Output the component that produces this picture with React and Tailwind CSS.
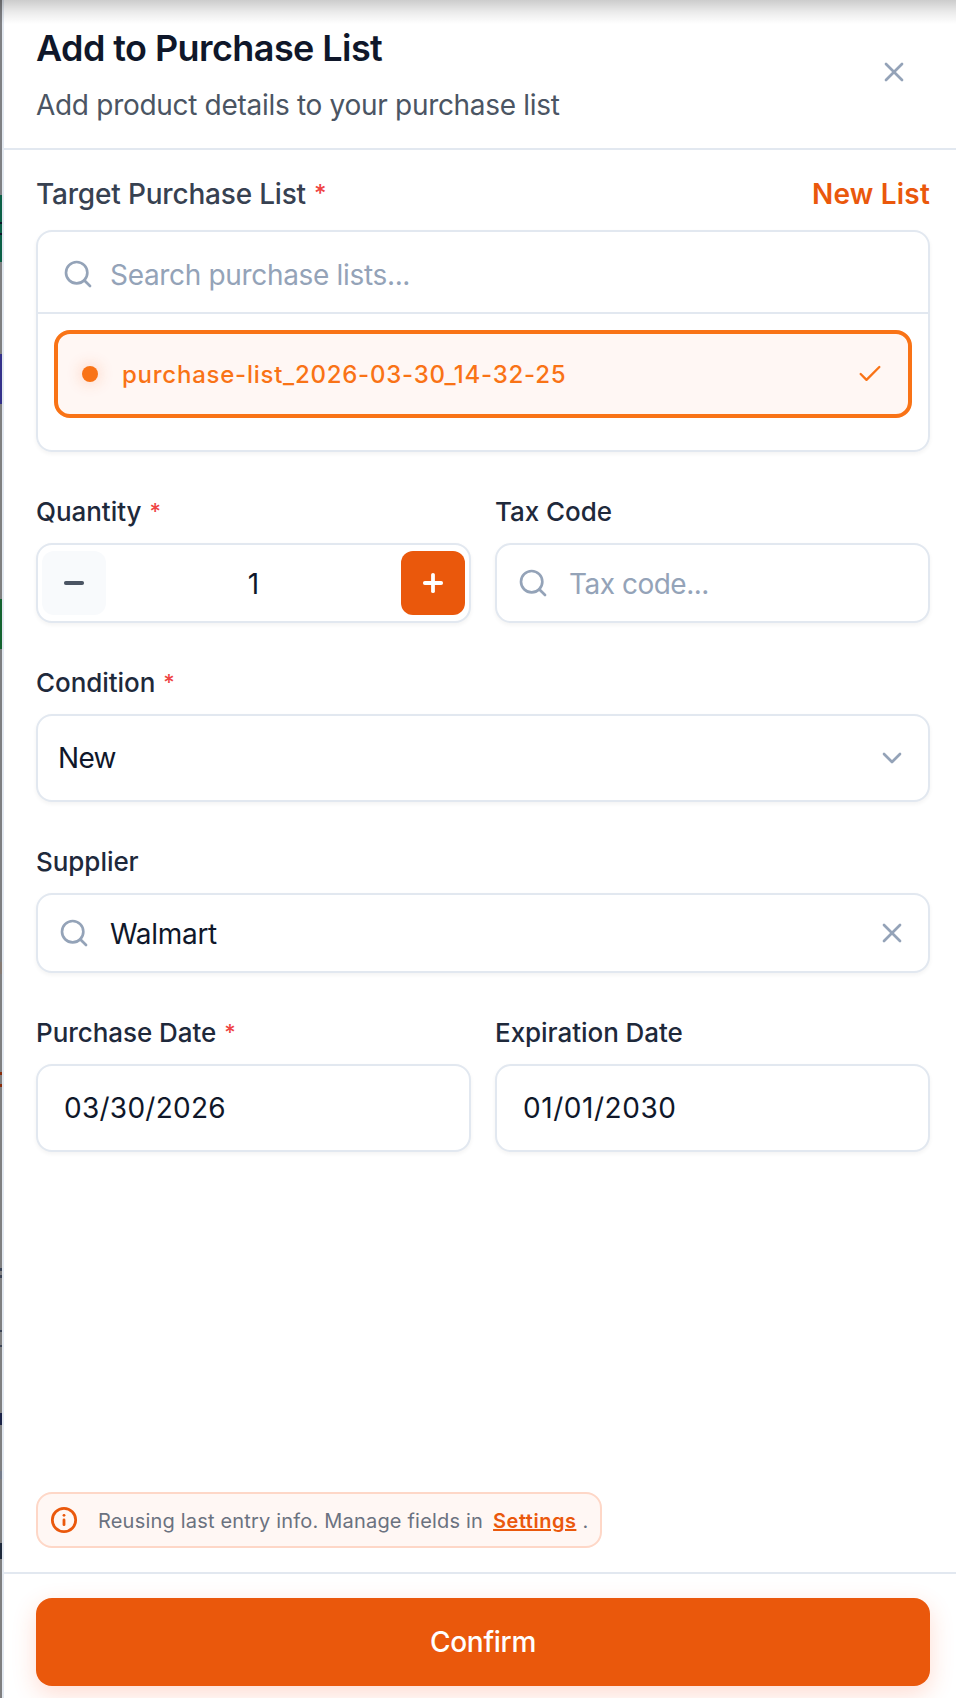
import React, { useState } from 'react'
import { Check, ChevronDown, Info, Minus, Plus, Search, X } from 'lucide-react'

// page edge that stays visible beside the drawer
const edge = [
    { h: 195, color: '#7f8083' },
    { h: 27, color: '#0b6046' },
    { h: 2, color: '#0f172a' },
    { h: 9, color: '#0b6046' },
    { h: 2, color: '#0f172a' },
    { h: 27, color: '#0b6046' },
    { h: 92, color: '#7f7f80' },
    { h: 50, color: '#34318a' },
    { h: 195, color: '#7f7f7f' },
    { h: 50, color: '#14632f' },
    { h: 313, color: '#7d7e80' },
    { h: 12, color: '#867a72' },
    { h: 98, color: '#7f7f80' },
    { h: 3, color: '#8a2c0a' },
    { h: 9, color: '#7f7f80' },
    { h: 3, color: '#8a2c0a' },
    { h: 181, color: '#7f7f80' },
    { h: 3, color: '#3c4455' },
    { h: 4, color: '#7f7f80' },
    { h: 3, color: '#3c4455' },
    { h: 52, color: '#7f7f80' },
    { h: 2, color: '#3c4455' },
    { h: 13, color: '#7f7f80' },
    { h: 2, color: '#3c4455' },
    { h: 66, color: '#7f7f80' },
    { h: 12, color: '#1b2347' },
    { h: 46, color: '#7f7f80' },
    { h: 8, color: '#747b89' },
    { h: 64, color: '#7f7f80' },
    { h: 16, color: '#1e293b' },
    { h: 140, color: '#7f7f80' }
]

const box = 'flex items-center w-full rounded-2xl border-2 border-[#e2e8f0] bg-white shadow-[0_2px_4px_rgba(0,0,0,0.05)]'

function Field({ label, required, children }) {
    return (
        <div className="flex-1 min-w-0">
            <label className="block h-[39px] mb-3 text-[26px] leading-[39px] font-medium tracking-[-0.05px] text-[#1e293b]">
                {label}
                {required && <span className="ml-2 align-[2px] text-[22px] leading-none font-medium text-[#ef4444]">*</span>}
            </label>
            {children}
        </div>
    )
}

export default function App() {
    const [quantity, setQuantity] = useState(1)
    const [supplier, setSupplier] = useState('Walmart')

    return (
        <div className="relative flex w-[956px] h-[1698px] overflow-hidden bg-white font-['Inter',sans-serif]">
            <div className="flex flex-col w-0.5 shrink-0">
                {edge.map((part, idx) => (
                    <div key={idx} className="shrink-0" style={{ height: part.h, background: part.color }} />
                ))}
            </div>

            <section className="flex flex-col flex-1 min-w-0 border-l-2 border-[#e2e8f0]">
                {/* Header */}
                <header className="flex items-start justify-between h-[150px] shrink-0 pl-8 pr-[46px] pt-6 border-b-2 border-[#e2e8f0]">
                    <div>
                        <h2 className="text-[36px] leading-[48px] font-semibold tracking-[-0.58px] text-[#0f172a]">Add to Purchase List</h2>
                        <p className="mt-3 text-[28px] leading-[42px] tracking-[-0.3px] text-[#4b5563]">Add product details to your purchase list</p>
                    </div>
                    <button className="mt-8 text-[#94a3b8]">
                        <X size={32} strokeWidth={2} />
                    </button>
                </header>

                <main className="flex flex-col flex-1 pl-8 pr-[26px] pt-6">
                    {/* Target list */}
                    <div className="flex items-center justify-between h-10 mb-4 pt-px text-[28px] leading-[41px]">
                        <label className="font-medium tracking-[-0.19px] text-[#374151]">
                            Target Purchase List<span className="ml-2 align-[2px] text-[24px] leading-none font-medium text-[#ef4444]">*</span>
                        </label>
                        <button className="font-semibold tracking-[0.2px] text-[#ea580c]">New List</button>
                    </div>
                    <div className="h-[222px] rounded-2xl border-2 border-[#e2e8f0] shadow-[0_2px_4px_rgba(0,0,0,0.05)]">
                        <div className="flex items-center h-[82px] pl-6 pt-1 border-b-2 border-[#e2e8f0]">
                            <Search size={32} strokeWidth={2} className="text-[#94a3b8] shrink-0" />
                            <input
                                className="flex-1 ml-4 pt-0.5 text-[28px] tracking-[-0.33px] outline-none placeholder:text-[#94a3b8]"
                                placeholder="Search purchase lists..."
                            />
                        </div>
                        <div className="p-4">
                            <div className="flex items-center h-[88px] pl-6 pr-6 rounded-2xl border-4 border-[#f97316] bg-[#fff7f4] text-[#f97316]">
                                <span className="w-4 h-4 rounded-full bg-[#f97316] shadow-[0_0_16px_rgba(249,90,22,0.3)]"></span>
                                <span className="flex-1 ml-6 pt-0.5 text-[24px] font-medium tracking-[0.75px]">purchase-list_2026-03-30_14-32-25</span>
                                <Check size={28} strokeWidth={2} />
                            </div>
                        </div>
                    </div>

                    <div className="flex flex-col gap-10 mt-10">
                        <div className="flex gap-6">
                            <Field label="Quantity" required>
                                <div className={`${box} justify-between h-20 px-1`}>
                                    <button
                                        className="flex items-center justify-center w-16 h-16 rounded-xl bg-[#f8fafc] text-[#4b5563]"
                                        onClick={() => setQuantity(Math.max(1, quantity - 1))}
                                    >
                                        <Minus size={28} strokeWidth={3.25} />
                                    </button>
                                    <span className="pt-0.5 text-[28px] leading-10 text-[#0f172a]">{quantity}</span>
                                    <button
                                        className="flex items-center justify-center w-16 h-16 rounded-xl bg-[#ea580c] text-white"
                                        onClick={() => setQuantity(quantity + 1)}
                                    >
                                        <Plus size={28} strokeWidth={3.25} />
                                    </button>
                                </div>
                            </Field>
                            <Field label="Tax Code">
                                <div className={`${box} h-20 pl-5 pr-5`}>
                                    <Search size={32} strokeWidth={2} className="text-[#94a3b8] shrink-0" />
                                    <input
                                        className="flex-1 min-w-0 ml-5 pt-0.5 text-[28px] tracking-[-0.5px] outline-none placeholder:text-[#94a3b8]"
                                        placeholder="Tax code..."
                                    />
                                </div>
                            </Field>
                        </div>

                        <Field label="Condition" required>
                            <div className={`${box} justify-between h-22 px-5 text-[28px] tracking-[-0.7px] text-[#0f172a]`}>
                                <span>New</span>
                                <ChevronDown size={32} strokeWidth={2} className="text-[#94a3b8]" />
                            </div>
                        </Field>

                        <Field label="Supplier">
                            <div className={`${box} h-20 px-5`}>
                                <Search size={32} strokeWidth={2} className="text-[#94a3b8] shrink-0" />
                                <input
                                    className="flex-1 min-w-0 ml-5 pt-0.5 text-[28px] tracking-[-0.3px] text-[#0f172a] outline-none"
                                    value={supplier}
                                    onChange={(e) => setSupplier(e.target.value)}
                                />
                                <button className="text-[#94a3b8]" onClick={() => setSupplier('')}>
                                    <X size={32} strokeWidth={2} />
                                </button>
                            </div>
                        </Field>

                        <div className="flex gap-6">
                            <Field label="Purchase Date" required>
                                <div className={`${box} h-22 px-[26px] text-[28px] tracking-[0.27px] text-[#0f172a]`}>03/30/2026</div>
                            </Field>
                            <Field label="Expiration Date">
                                <div className={`${box} h-22 px-[26px] text-[28px] tracking-[0.55px] text-[#0f172a]`}>01/01/2030</div>
                            </Field>
                        </div>
                    </div>

                    {/* Reuse hint */}
                    <div className="flex items-center self-start h-14 mt-auto mb-6 px-3 rounded-2xl border-2 border-[#fed7c7] bg-[#fff7f4] text-[20px] text-[#6b7280]">
                        <Info size={28} strokeWidth={2.4} className="text-[#ea580c]" />
                        <span className="ml-5 pt-0.5 tracking-[0.19px]">Reusing last entry info. Manage fields in</span>
                        <a className="ml-2.5 pt-0.5 font-semibold tracking-[0.5px] text-[#ea580c] underline">Settings</a>
                        <span className="ml-1.5 pt-0.5">.</span>
                    </div>
                </main>

                <footer className="h-[126px] shrink-0 pl-8 pr-[26px] pt-6 border-t-2 border-[#e2e8f0]">
                    <button className="w-full h-22 rounded-2xl bg-[#ea580c] text-[28px] font-medium tracking-[-0.3px] text-white shadow-[0_8px_24px_rgba(255,80,30,0.2)]">
                        Confirm
                    </button>
                </footer>
            </section>

            {/* Shade falling from the bar above */}
            <div className="absolute top-0 left-0 w-full h-6 bg-linear-to-b from-black/20 via-black/8 to-transparent"></div>
        </div>
    )
}
